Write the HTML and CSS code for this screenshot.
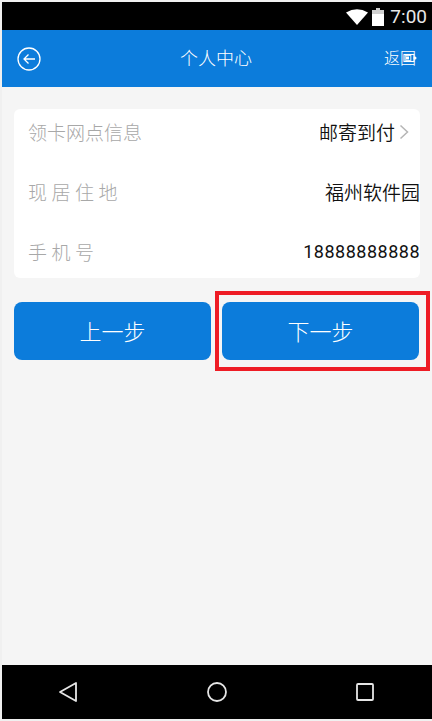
FILE: index.html
```html
<!DOCTYPE html>
<html lang="zh">
<head>
<meta charset="utf-8">
<title>个人中心</title>
<link rel="stylesheet" href="styles.css">
</head>
<body>
<div class="phone">
  <div class="status">
    <svg class="wifi" width="22" height="16" viewBox="0 0 22 16"><path d="M0 3.500Q11 -3 22 3.500L11 16Z" fill="#fff"/></svg>
    <svg class="battery" width="12" height="18" viewBox="0 0 12 18"><path d="M4 0H8V2H12V6H0V2H4Z" fill="#d0d0d0"/><path d="M0 6H12V18H0Z" fill="#fff"/></svg>
    <span class="time">7:00</span>
  </div>
  <header class="bar">
    <svg class="back" width="24" height="24" viewBox="0 0 24 24" fill="none" stroke="#fff" stroke-width="1.300"><circle cx="12" cy="12" r="11"/><path d="M18 12H7M11.500 7.500L7 12l4.500 4.500"/></svg>
    <span class="title">个人中心</span>
    <span class="ret">返回<svg class="ret-icon" width="16" height="10" viewBox="0 0 16 10"><rect x="3" y="1.500" width="10" height="7" fill="none" stroke="#fff" stroke-width="1.100"/><rect x="5" y="3.500" width="3" height="3" fill="#fff"/><circle cx="14" cy="5" r="1.500" fill="#fff"/></svg></span>
  </header>
  <main class="content">
    <section class="card">
      <div class="row"><span class="label">领卡网点信息</span><span class="value">邮寄到付<svg class="chev" width="10" height="16" viewBox="0 0 10 16" fill="none" stroke="#b5b5b5" stroke-width="1.500"><path d="M1.500 1.500L8.500 8L1.500 14.500"/></svg></span></div>
      <div class="row"><span class="label wide">现居住地</span><span class="value">福州软件园</span></div>
      <div class="row"><span class="label wide">手机号</span><span class="value num">18888888888</span></div>
    </section>
    <div class="actions">
      <button class="btn">上一步</button>
      <div class="highlight"><button class="btn">下一步</button></div>
    </div>
  </main>
  <nav class="nav">
    <svg width="20" height="22" viewBox="0 0 20 22" fill="none" stroke="#e6e6e6" stroke-width="1.800" stroke-linejoin="round"><path d="M18 2V20L2 11Z"/></svg>
    <svg width="20" height="20" viewBox="0 0 20 20" fill="none" stroke="#e6e6e6" stroke-width="1.800"><circle cx="10" cy="10" r="9"/></svg>
    <svg width="18" height="18" viewBox="0 0 18 18" fill="none" stroke="#e6e6e6" stroke-width="1.800" stroke-linejoin="round"><rect x="1" y="1" width="16" height="16" rx="1"/></svg>
  </nav>
</div>
</body>
</html>
```
FILE: styles.css
```css
* { box-sizing: border-box; }
html, body { margin: 0; height: 100%; background: #f0f0f0; }
body { overflow: hidden; font-family: "Noto Sans CJK SC", "Roboto", sans-serif; }
.phone { display: flex; flex-direction: column; height: 717px; margin: 2px 0 0 2px; }
.status { height: 28px; background: #000; display: flex; align-items: center; justify-content: flex-end; flex: none; padding-top: 1px; }
.wifi { margin-right: 4px; }
.battery { margin-right: 6px; }
.time { color: #e8e8e8; font: 19px/28px Roboto, sans-serif; margin-right: 5px; }
.bar { height: 57px; flex: none; background: #0c7cdb; display: flex; align-items: center; position: relative; color: #fff; padding: 0 16px 0 15px; }
.back { flex: none; }
.title { position: absolute; left: 0; right: 0; text-align: center; font-size: 18px; font-weight: 300; padding-right: 2px; top: 14px; line-height: 26px; }
.ret { margin-left: auto; margin-top: -3px; font-size: 16px; font-weight: 300; position: relative; }
.ret-icon { position: absolute; right: -1px; top: 8px; }
.content { flex: 1; background: #f5f5f5; padding: 22px 12px 0; }
.card { width: 406px; height: 169px; background: #fff; border-radius: 6px; display: flex; flex-direction: column; gap: 12px; }
.row { height: 48px; display: flex; align-items: center; justify-content: space-between; padding-left: 14px; }
.label { font-size: 19px; font-weight: 300; color: #a8a8a8; line-height: 26px; margin-top: -2px; }
.wide { letter-spacing: 4.500px; }
.value { font-size: 19px; font-weight: 350; color: #111; display: flex; align-items: center; gap: 4px; line-height: 26px; margin-top: -2px; }
.chev { margin-right: 11px; }
.num { font-family: Roboto, sans-serif; font-size: 18px; font-weight: 400; letter-spacing: 0.500px; }
.actions { display: flex; margin-top: 13px; align-items: center; }
.btn { display: block; flex: none; width: 197px; height: 58px; border: 0; border-radius: 8px; background: #0c7cdb; color: #fff; font: 300 22px "Noto Sans CJK SC", sans-serif; padding: 0 0 3px; }
.highlight { flex: none; margin-left: 4px; border: 4px solid #ee1c25; padding: 7px 7px 7px 3px; }
.nav { height: 54px; flex: none; background: #000; display: flex; align-items: center; justify-content: space-between; padding: 0 58px 0 56px; }
```
